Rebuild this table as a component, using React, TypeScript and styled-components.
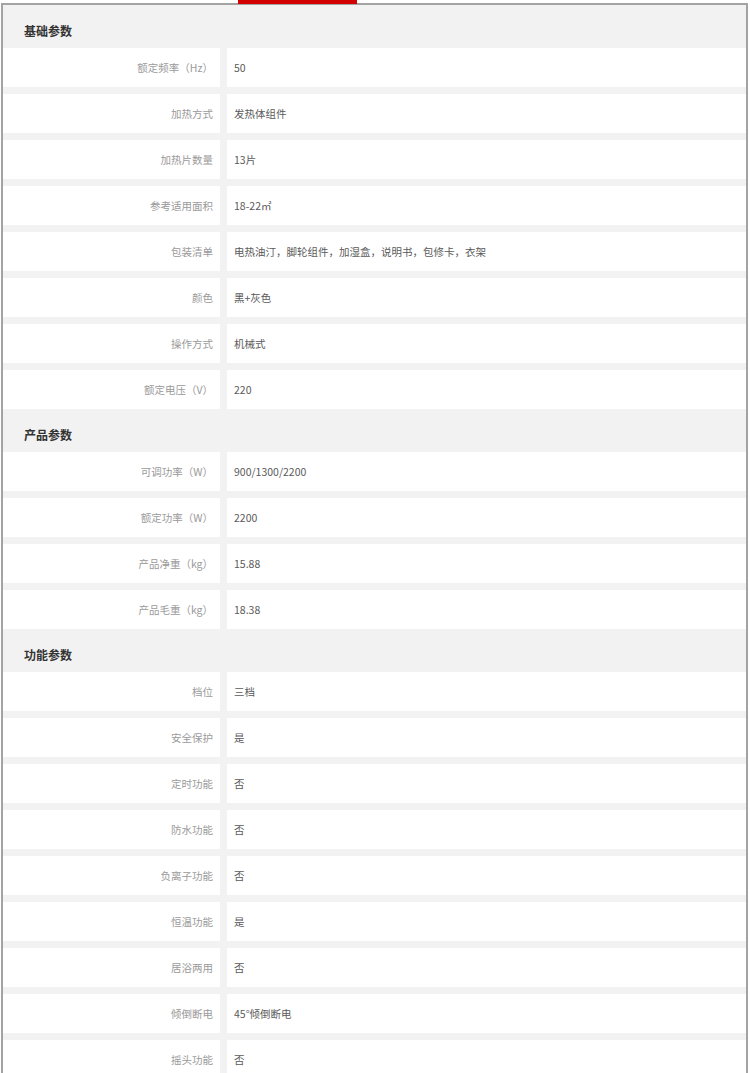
import styled, { createGlobalStyle } from 'styled-components';

const GlobalStyle = createGlobalStyle`
    body {
        margin: 0;
        background: #fff;
        font-family: "Noto Sans CJK SC", "Liberation Sans", sans-serif;
    }
`;

const sections = [
    {
        title: '基础参数',
        rows: [
            ['额定频率（Hz）', '50'],
            ['加热方式', '发热体组件'],
            ['加热片数量', '13片'],
            ['参考适用面积', '18-22㎡'],
            ['包装清单', '电热油汀，脚轮组件，加湿盒，说明书，包修卡，衣架'],
            ['颜色', '黑+灰色'],
            ['操作方式', '机械式'],
            ['额定电压（V）', '220'],
        ],
    },
    {
        title: '产品参数',
        rows: [
            ['可调功率（W）', '900/1300/2200'],
            ['额定功率（W）', '2200'],
            ['产品净重（kg）', '15.88'],
            ['产品毛重（kg）', '18.38'],
        ],
    },
    {
        title: '功能参数',
        rows: [
            ['档位', '三档'],
            ['安全保护', '是'],
            ['定时功能', '否'],
            ['防水功能', '否'],
            ['负离子功能', '否'],
            ['恒温功能', '是'],
            ['居浴两用', '否'],
            ['倾倒断电', '45°倾倒断电'],
            ['摇头功能', '否'],
        ],
    },
];

const App = () =>
    <Page>
        <GlobalStyle />
        <TabStrip>
            <ActiveTab />
        </TabStrip>
        <Table>
            {sections.map((s) =>
                <Section key={s.title}>
                    <SectionTitle>{s.title}</SectionTitle>
                    <Rows>
                        {s.rows.map(([label, value]) =>
                            <Row key={label}>
                                <Label>{label}</Label>
                                <Value>{value}</Value>
                            </Row>
                        )}
                    </Rows>
                </Section>
            )}
        </Table>
    </Page>

const Page = styled.div`
    width: 750px;
    height: 1073px;
    overflow: hidden;
`;

const TabStrip = styled.div`
    height: 3px;
    position: relative;
`;

const ActiveTab = styled.div`
    position: absolute;
    left: 238px;
    top: 0;
    width: 119px;
    height: 4px;
    background: #d20000;
    z-index: 1;
`;

const Table = styled.div`
    margin-left: 1px;
    width: 743px;
    border: 2px solid #a3a3a3;
    border-bottom: none;
    background: #f2f2f2;
`;

const Section = styled.div`
    display: flex;
    flex-direction: column;
`;

const SectionTitle = styled.div`
    height: 43px;
    box-sizing: border-box;
    padding: 16px 0 0 21px;
    line-height: 20px;
    font-size: 12px;
    font-weight: bold;
    color: #333;
`;

const Rows = styled.div`
    display: flex;
    flex-direction: column;
    gap: 7px;
`;

const Row = styled.div`
    display: grid;
    grid-template-columns: 217px 1fr;
    column-gap: 7px;
    height: 39px;
`;

const Cell = styled.div`
    background: #fff;
    display: flex;
    align-items: center;
    font-size: 10.5px;
    white-space: nowrap;
`;

const Label = styled(Cell)`
    justify-content: flex-end;
    padding-right: 7px;
    color: #9a9a9a;
`;

const Value = styled(Cell)`
    padding-left: 7px;
    color: #5a5a5a;
`;

export default App;
